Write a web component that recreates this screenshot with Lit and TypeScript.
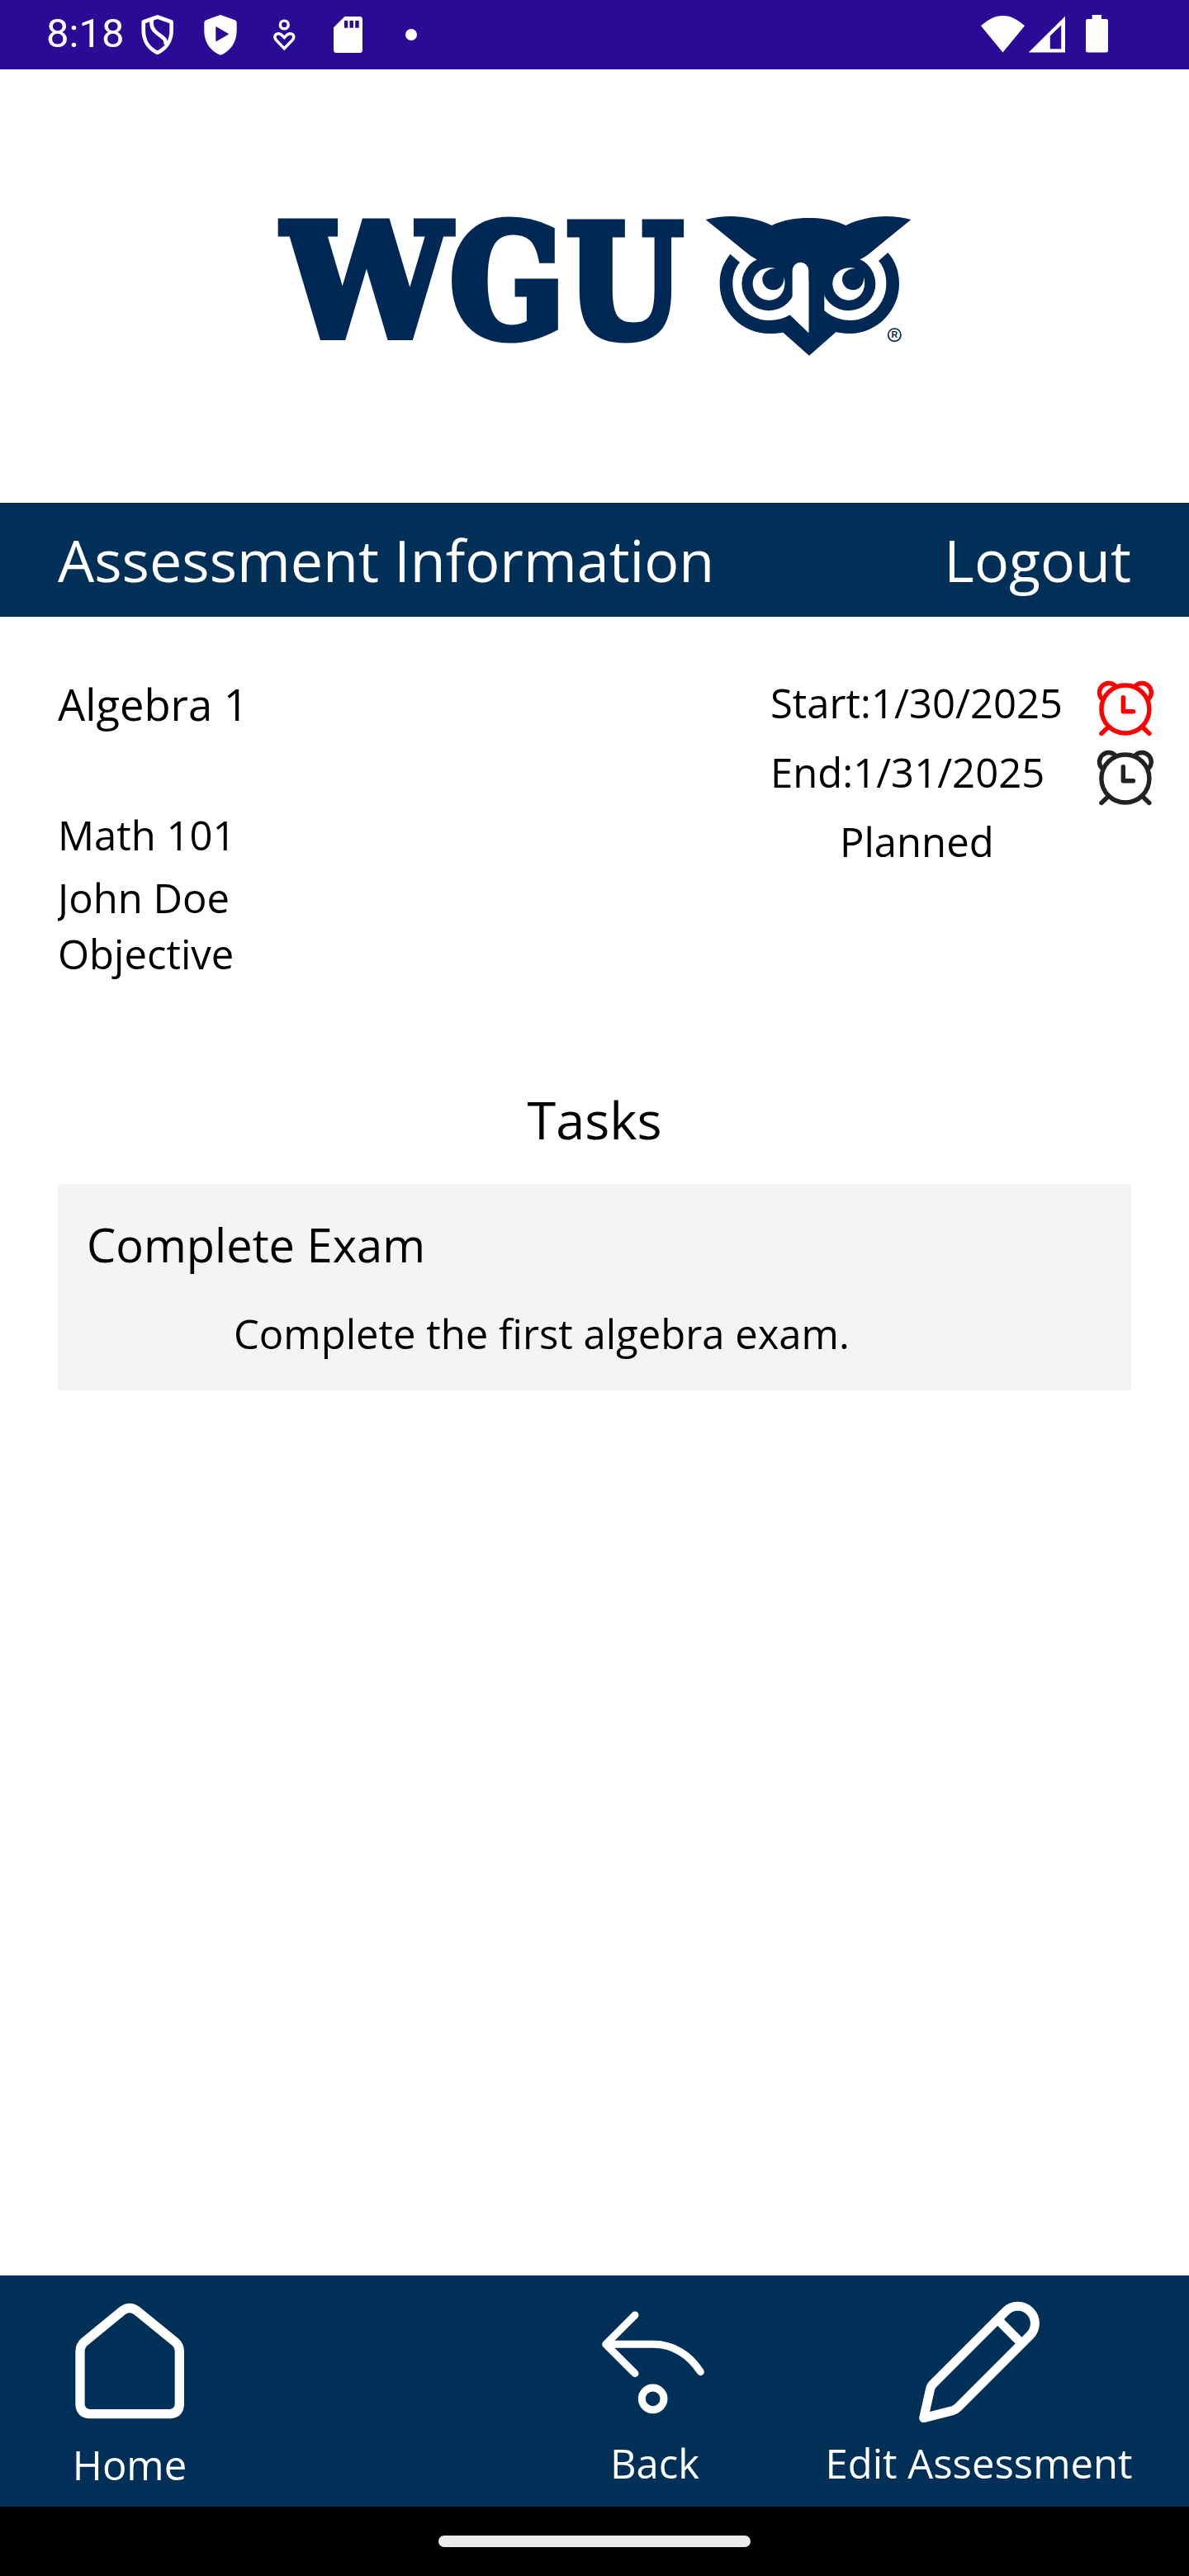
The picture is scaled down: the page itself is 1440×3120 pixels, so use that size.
import { LitElement, html, css, svg } from "lit";
import { customElement, property } from "lit/decorators.js";

@customElement("status-bar")
class StatusBar extends LitElement {
  static styles = css`
    :host { display: block; }
    .bar { display: flex; height: 84px; background: #2b0a95; color: #fff; padding: 0 96px 0 56px; }
    .time { width: 114px; font: 49px/82px Roboto, sans-serif; white-space: nowrap; }
    .notices { display: flex; gap: 37px; flex: 1; }
    .system { display: flex; }
    svg { display: block; fill: #fff; }
  `;
  render() {
    const icon = (x: number, w: number, body: unknown) =>
      html`<svg width=${w} height="84" viewBox="${x} 0 ${w} 84">${body}</svg>`;
    return html`<div class="bar">
      <div class="time">8:18</div>
      <div class="notices">
        ${icon(170, 40, svg`<g fill="none" stroke="#fff" stroke-width="4.6" stroke-linejoin="round"><path d="M190.700 20.500L207.600 26.500V37C207.600 49.500 201 59 190.700 63.800C180.400 59 173.800 49.500 173.800 37V26.500Z"/><path d="M184 23.500C182.500 30 184 35.500 190 40C197 45.500 202 47.500 200.500 54"/></g>`)}
        ${icon(247, 40, svg`<path fill-rule="evenodd" d="M267 18L284.500 24.200Q286.700 25 286.700 27.200V37C286.700 51.500 278.500 62.500 267 66.800C255.500 62.500 247.300 51.500 247.300 37V27.200Q247.300 25 249.500 24.200ZM261.300 32.700V50.200Q261.300 50.600 261.800 50.200L276.500 41.700Q277 41.300 276.500 40.800L262 32.300Q261.300 32 261.300 32.700Z"/>`)}
        ${icon(324, 40, svg`<g fill="none" stroke="#fff" stroke-width="3.400"><circle cx="344.300" cy="30" r="4.900"/><path d="M344.300 58.700L334.600 48.600C331.800 45.600 332.300 41 337 40.700C340.300 40.600 342.200 43.300 344.300 45.500C346.400 43.300 348.300 40.600 351.600 40.700C356.300 41 356.800 45.600 354 48.600Z"/></g>`)}
        ${icon(401, 40, svg`<path fill-rule="evenodd" d="M417.500 20H435.500Q439 20 439 23.500V60.500Q439 64 435.500 64H407.500Q404 64 404 60.500V33.300ZM417 25V33.700H421.200V25ZM423.500 25V33.700H427.900V25ZM430.200 25V33.700H434.700V25Z"/>`)}
        ${icon(478, 40, svg`<circle cx="498" cy="42" r="7"/>`)}
      </div>
      <div class="system">
        ${icon(1186, 58, svg`<path d="M1188 31.300C1197 23.500 1205 19 1214.500 19C1224 19 1232 23.500 1241 31.300L1214.500 63.500Z"/>`)}
        ${icon(1244, 50, svg`<path fill-rule="evenodd" d="M1290 19.700V63.600H1245.700ZM1285.200 30.500L1271.800 43.500V59.200H1285.200Z"/>`)}
        ${icon(1294, 50, svg`<path d="M1322.700 18H1334V23H1339.500Q1342 23 1342 25.500V61Q1342 63.500 1339.500 63.500H1317.500Q1315 63.500 1315 61V25.500Q1315 23 1317.500 23H1322.700Z"/>`)}
      </div>
    </div>`;
  }
}

@customElement("brand-logo")
class BrandLogo extends LitElement {
  static styles = css`
    :host { display: flex; height: 525px; justify-content: center; align-items: flex-start; }
    svg { display: block; margin-top: 166px; }
    .word { font: bold 187px "DejaVu Serif", serif; fill: #002855; stroke: #002855; stroke-width: 11px; }
    .mark { fill: #002855; }
    .cut { fill: #fff; }
    .reg { font: bold 32px "Liberation Sans", sans-serif; }
  `;
  render() {
    const crescent = (dx: number) => svg`<path class="cut" transform="translate(${dx} 0)"
      d="M328 256C300 246 245 260 245 313A59.500 59.500 0 0 0 304 371C347 371 371 328 358 285C361 310 346 334 319 334A39.500 39.500 0 0 1 280 295C280 275 298 255 328 256Z"/>`;
    return html`<svg width="780" height="190" viewBox="330 250 780 190" role="img" aria-label="WGU">
      <text class="word" y="406.500"><tspan x="343.500" textLength="201" lengthAdjust="spacingAndGlyphs">W</tspan><tspan x="545" textLength="139" lengthAdjust="spacingAndGlyphs">G</tspan><tspan x="686" textLength="141" lengthAdjust="spacingAndGlyphs">U</tspan></text>
      <g class="mark" transform="translate(830 240) scale(.33333)">
        <path d="M74 78C150 58 235 62 314 99C360 78 400 72 448 72C500 72 545 80 583 99C660 62 745 58 820 78L690 184C672 199 656 214 634 223L593 311H505V300H389L303 311L262 224C245 216 228 204 212 190Z"/>
        <circle cx="303" cy="311" r="98"/><circle cx="593" cy="311" r="98"/>
        <path d="M163 203C135 240 125 270 125 311C125 410 205 492 305 492Q335 492 355 488L450 572L548 486Q570 492 600 492C700 490 777 405 777 311C777 270 765 230 736 198L702 228C722 250 730 280 730 311C730 385 670 444 600 444C560 444 530 430 505 408V200H448V489L380 424Q350 444 305 444C230 444 172 385 172 311C172 280 180 255 198 233Z"/>
        <path class="cut" d="M389 263A29.500 29.500 0 0 1 448 263V489L380 424L389 410Z"/>
        ${crescent(0)}${crescent(290)}
        <circle cx="760" cy="497" r="23" fill="none" stroke="#002855" stroke-width="5"/>
        <text class="reg" x="760" y="508.500" text-anchor="middle">R</text>
      </g>
    </svg>`;
  }
}

@customElement("alarm-icon")
class AlarmIcon extends LitElement {
  @property() color = "#222";
  static styles = css`
    :host { display: block; height: 68px; }
    svg { display: block; fill: none; stroke-width: 5.400px; stroke-linecap: round; stroke-linejoin: round; }
  `;
  render() {
    return html`<svg width="70" height="68" viewBox="0 0 70 68" stroke=${this.color}>
      <circle cx="34.900" cy="35" r="29"/>
      <path d="M32.300 20.800V37.700H44.500"/>
      <path d="M6.400 22.300A11.300 11.300 0 0 1 22.200 6.200M63.400 22.300A11.300 11.300 0 0 0 47.600 6.200M13.800 57L5.900 64.500M56 57L63.900 64.500"/>
    </svg>`;
  }
}

@customElement("app-root")
class AppRoot extends LitElement {
  static styles = css`
    * { box-sizing: border-box; }
    :host { display: block; font-family: "Open Sans", sans-serif; color: #000; background: #fff; }
    .page { display: flex; flex-direction: column; height: 3120px; font-size: 49px; white-space: nowrap; }
    .title { display: flex; justify-content: space-between; padding: 0 70px; height: 138px; font-size: 70px; line-height: 138px; background: #003057; color: #fff; }
    .info { display: flex; justify-content: space-between; padding: 62px 42px 0 70px; height: 567px; }
    .left { display: flex; flex-direction: column; }
    .course { font-size: 52.500px; line-height: 88px; height: 163px; }
    .line { line-height: 78px; }
    .line.short { line-height: 62px; }
    .line.name { line-height: 74px; overflow: hidden; }
    .right { width: 465px; line-height: 84px; }
    .date { display: flex; justify-content: space-between; align-items: flex-start; height: 84px; }
    .date alarm-icon { margin-top: 15px; }
    .state { padding-left: 84px; }
    .tasks { flex: 1; padding: 0 70px; }
    .heading { text-align: center; font-size: 63px; line-height: 83px; height: 120px; }
    .card { height: 250px; background: #f4f4f4; padding: 30px 35px 0; }
    .task { font-size: 56px; line-height: 86px; }
    .detail { padding-left: 178px; line-height: 66px; margin-top: 32px; }
    .nav { display: flex; height: 280px; background: #003057; color: #fff; padding: 0 70px 0 87px; }
    .item { display: flex; flex-direction: column; align-items: center; padding-top: 28px; width: 140px; }
    .item svg { display: block; fill: none; stroke: #fff; stroke-linecap: round; stroke-linejoin: round; flex: none; }
    .item span { line-height: 66px; margin-top: 16px; }
    .home span { margin-top: 18px; }
    .back { margin-left: auto; width: 110px; }
    .edit { width: 369px; margin-left: 153px; }
    .gesture { height: 84px; background: #000; display: flex; justify-content: center; align-items: center; }
    .pill { width: 378px; height: 14px; border-radius: 7px; background: #ebebeb; }
  `;
  render() {
    return html`<div class="page">
      <status-bar></status-bar>
      <brand-logo></brand-logo>
      <div class="title"><span>Assessment Information</span><span>Logout</span></div>
      <div class="info">
        <div class="left">
          <div class="course">Algebra 1</div>
          <div class="line">Math 101</div>
          <div class="line name">John Doe</div>
          <div class="line short">Objective</div>
        </div>
        <div class="right">
          <div class="date"><span>Start:1/30/2025</span><alarm-icon color="#ff0000"></alarm-icon></div>
          <div class="date"><span>End:1/31/2025</span><alarm-icon color="#222222"></alarm-icon></div>
          <div class="state">Planned</div>
        </div>
      </div>
      <div class="tasks">
        <div class="heading">Tasks</div>
        <div class="card">
          <div class="task">Complete Exam</div>
          <div class="detail">Complete the first algebra exam.</div>
        </div>
      </div>
      <div class="nav">
        <div class="item home">
          <svg width="150" height="150" viewBox="127 132 450 450" stroke-width="34"><path d="M172 518V324Q172 302 188 289L326 176Q352 157 378 176L517 289Q533 302 533 324V518Q530 548 500 551H205Q175 548 172 518Z"/></svg>
          <span>Home</span>
        </div>
        <div class="item back">
          <svg width="150" height="150" viewBox="116 132 450 450" stroke-width="27"><path d="M269 192L163 298L269 404M163 298H335C408 298 468 337 507 398"/><circle cx="334" cy="496" r="40"/></svg>
          <span>Back</span>
        </div>
        <div class="item edit">
          <svg width="150" height="150" viewBox="395 132 450 450" stroke-width="33"><path d="M418 566L441 464Q443 451 452 442L716 178A62 62 0 0 1 804 266L543 527Q535 535 524 539ZM691 212L768 289"/></svg>
          <span>Edit Assessment</span>
        </div>
      </div>
      <div class="gesture"><div class="pill"></div></div>
    </div>`;
  }
}
